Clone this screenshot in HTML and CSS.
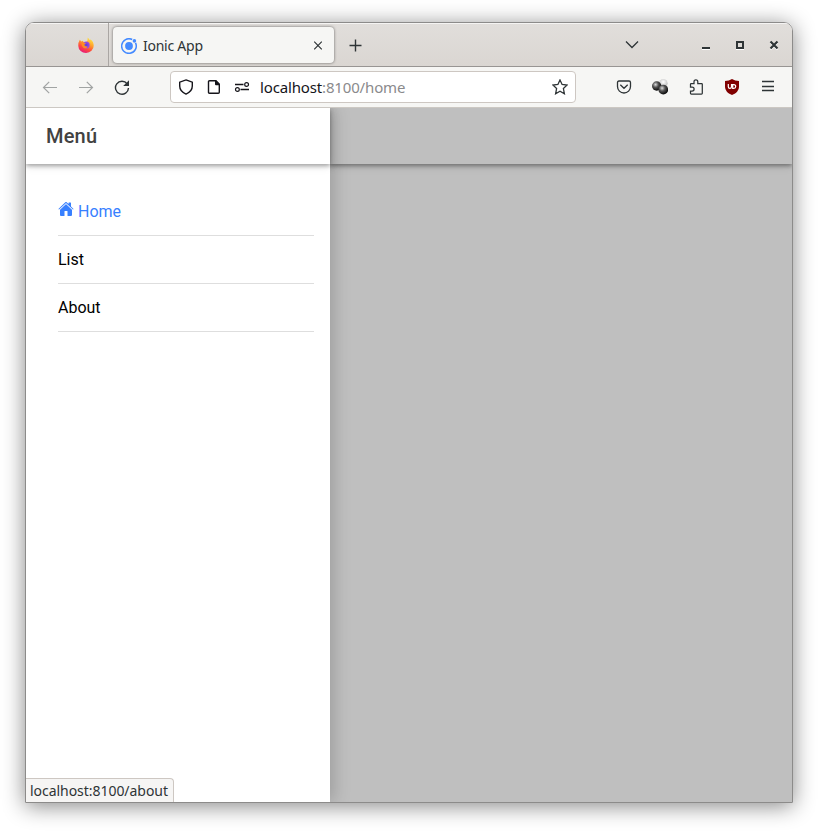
FILE: index.html
```html
<!DOCTYPE html>
<html lang="es">
<head>
<meta charset="utf-8">
<title>Ionic App</title>
<link rel="stylesheet" href="styles.css">
</head>
<body>
<svg class="defs" aria-hidden="true">
  <defs>
    <linearGradient id="flame" x1="0.8" y1="0" x2="0.3" y2="1"><stop offset="0" stop-color="#fff04a"/><stop offset=".4" stop-color="#ffa12b"/><stop offset=".7" stop-color="#ff4a3d"/><stop offset="1" stop-color="#e5187f"/></linearGradient>
    <radialGradient id="globe"><stop offset="0" stop-color="#5641d8"/><stop offset="1" stop-color="#a44be8"/></radialGradient>
    <radialGradient id="dark" cx=".38" cy=".35" r=".65"><stop offset="0" stop-color="#ddd"/><stop offset=".45" stop-color="#555"/><stop offset="1" stop-color="#080808"/></radialGradient>
    <radialGradient id="light" cx=".5" cy=".35" r=".65"><stop offset="0" stop-color="#fff"/><stop offset="1" stop-color="#b4b4b4"/></radialGradient>
  </defs>
</svg>
<main class="window">
  <header class="tabbar">
    <div class="pinned">
      <svg class="icon" viewBox="0 0 16 16"><path fill="url(#flame)" d="M1.8 2.8 3.3 4.4 5 3.7 5.5 5.2 8 5.4 9.5 3.5 9.7.5Q11 1.5 11.7 3L12.7 2.6Q15.8 5 15.7 8.8A7.7 7 0 0 1 .3 9Q.2 5.2 1.8 2.8Z"/><circle cx="8.2" cy="8" r="3.5" fill="url(#globe)"/><path fill="#ff8b23" d="M3.5 5.2 8 6 6.3 7.6Q6.3 10 9.7 9.4 8.4 12 5.8 11 3.3 9.4 3.5 5.2Z"/></svg>
    </div>
    <div class="tab">
      <svg class="icon" viewBox="0 0 16 16"><circle cx="8" cy="8" r="3.9" fill="#448aff"/><path fill="none" stroke="#448aff" stroke-width="1.5" d="M11.2 1.5A7.3 7.3 0 1 0 14.5 4.8"/><circle cx="13.4" cy="2.9" r="1.8" fill="#448aff"/></svg>
      <span class="tab-title">Ionic App</span>
      <svg class="icon line" viewBox="0 0 16 16"><path d="m4.2 3.7 7.6 7.6M11.8 3.7l-7.6 7.6"/></svg>
    </div>
    <svg class="icon line new-tab" viewBox="0 0 16 16"><path stroke-width="1.4" d="M7.500 2.500v12M1.500 8.500h12"/></svg>
    <div class="controls">
      <svg class="icon line all-tabs" viewBox="0 0 16 16"><path stroke-width="1.3" d="m2 4.5 6 6 6-6"/></svg>
      <svg class="icon" viewBox="0 0 16 16"><path fill="#fff" d="M4 12h8v1H4z"/><path fill="#2e3436" d="M4 10h8v2H4z"/></svg>
      <svg class="icon" viewBox="0 0 16 16"><path fill="#fff" d="M4 12h8v1H4z"/><path fill="none" stroke="#2e3436" stroke-width="2" d="M5 5h6v6H5z"/></svg>
      <svg class="icon" viewBox="0 0 16 16"><path fill="none" stroke="#fff" stroke-width="2" d="m4.5 5.5 7 7m0-7-7 7"/><path fill="none" stroke="#2e3436" stroke-width="2.2" d="m4.5 4.5 7 7m0-7-7 7"/></svg>
    </div>
  </header>
  <nav class="toolbar">
    <div class="history">
      <svg class="icon line faded" viewBox="0 0 16 16"><path d="M15 8.5H1.5M7.2 2.8 1.5 8.5l5.7 5.7"/></svg>
      <svg class="icon line faded" viewBox="0 0 16 16"><path d="M1 8.5h13.5M8.8 2.8l5.7 5.7-5.7 5.7"/></svg>
      <svg class="icon line" viewBox="0 0 16 16"><path stroke-width="1.4" d="M13.2 4.8A6.5 6.5 0 1 0 14.5 9"/><path fill="#2e3436" stroke="none" d="M15 1.2v5.3a.5.5 0 0 1-.5.5H9.2z"/></svg>
    </div>
    <div class="address">
      <svg class="icon line dark" viewBox="0 0 16 16"><path stroke-width="1.4" d="M8 .9 14.3 3.2V7c0 3.3-2.3 6.4-6.3 8.1C4 13.4 1.7 10.3 1.7 7V3.2z"/></svg>
      <svg class="icon line dark" viewBox="0 0 16 16"><path stroke-width="1.4" d="M3.500 1.700h6l3.800 3.800v7.800q0 1-1 1H3.500q-1 0-1-1V2.700q0-1 1-1z"/><path fill="#15141a" stroke="none" d="M9 1h1.200L14 5v1.200H10q-1 0-1-1z"/></svg>
      <svg class="icon line dark" viewBox="0 0 16 16"><path stroke-width="1.3" d="M1 5.500h8.500M6.500 10.500h8.500"/><circle cx="12.600" cy="5.500" r="1.900"/><circle cx="3.400" cy="10.500" r="1.900"/></svg>
      <span class="url">localhost<span class="path">:8100/home</span></span>
      <svg class="icon line" viewBox="0 0 16 16"><path stroke-width="1.3" d="M8 .9 10.1 5.4 15.1 6 11.4 9.5 12.4 14.8 8 12.3 3.6 14.8 4.6 9.5.9 6 5.9 5.4z"/></svg>
    </div>
    <div class="extensions">
      <svg class="icon line" viewBox="0 0 16 16"><path stroke-width="1.3" d="M3 2h10q1.500 0 1.500 1.500v4a6.500 6.500 0 0 1-13 0v-4Q1.500 2 3 2zM4.300 5.800 8 9.300 11.700 5.800"/></svg>
      <svg class="icon" viewBox="0 0 16 16"><circle cx="11.300" cy="4.300" r="4.300" fill="url(#light)"/><circle cx="4.700" cy="7" r="4.700" fill="url(#dark)"/><circle cx="11.300" cy="10.600" r="4.900" fill="url(#dark)"/></svg>
      <svg class="icon line" viewBox="0 0 16 16"><path stroke-width="1.250" d="M2.500 8V5.300q0-.8.800-.8H6V2.700a1.900 1.900 0 0 1 3.800 0v1.800h3.700q.8 0 .8.800v8.900q0 .8-.8.8H3.300q-.8 0-.8-.8V12h1.600a2 2 0 0 0 0-4z"/></svg>
      <svg class="icon" viewBox="0 0 16 16"><path fill="#800000" d="M8 0Q11 2 15 2v6q0 5-7 8-7-3-7-8V2Q5 2 8 0z"/><path fill="none" stroke="#fff" stroke-width="1.200" d="M4.300 5v2.800a1.600 1.600 0 0 0 3.200 0V5M8.700 5.600h1.100a1.900 1.900 0 0 1 0 3.800H8.700z"/></svg>
      <svg class="icon line" viewBox="0 0 16 16"><path stroke-width="1.300" d="M2 2.500h12M2 7.500h12M2 11.500h12"/></svg>
    </div>
  </nav>
  <section class="page">
    <aside class="menu">
      <div class="menu-header"><h1>Menú</h1></div>
      <ul class="menu-list">
        <li class="active"><svg class="home" viewBox="0 0 512 512"><path d="M261.560 101.280a8 8 0 0 0-11.060 0L66.400 277.150a8 8 0 0 0-2.470 5.790L63.900 448a32 32 0 0 0 32 32H192a16 16 0 0 0 16-16V328a8 8 0 0 1 8-8h80a8 8 0 0 1 8 8v136a16 16 0 0 0 16 16h96.060a32 32 0 0 0 32-32V282.940a8 8 0 0 0-2.470-5.790z"/><path d="m490.910 244.150-74.800-71.560V64a16 16 0 0 0-16-16h-48a16 16 0 0 0-16 16v32l-57.920-55.380C272.770 35.140 264.710 32 256 32c-8.680 0-16.720 3.140-22.140 8.630l-212.700 203.500c-6.220 6-7 15.870-1.340 22.370A16 16 0 0 0 43 267.560L250.500 69.280a8 8 0 0 1 11.060 0l207.520 198.280a16 16 0 0 0 22.600-.44c6.140-6.360 5.630-16.860-.77-22.970z"/></svg> <span>Home</span></li>
        <li>List</li>
        <li>About</li>
      </ul>
      <div class="status">localhost:8100/about</div>
    </aside>
    <div class="backdrop"><div class="page-header"></div></div>
  </section>
</main>
</body>
</html>
```
FILE: styles.css
```css
* { box-sizing: border-box; }
body { margin: 0; padding: 22px 25px 28px; background: #fff; overflow: hidden; }
.defs { display: block; width: 0; height: 0; position: absolute; }
.icon { display: block; width: 16px; height: 16px; flex: none; }
.line { fill: none; stroke: #2e3436; stroke-width: 1.2; }
.dark { stroke: #15141a; }
.faded { opacity: .42; }
.window {
  display: flex; flex-direction: column; width: 768px; height: 781px;
  border: 1px solid #8c8b8a; border-radius: 9px 9px 0 0; overflow: hidden;
  box-shadow: 0 3px 22px rgba(0,0,0,.48);
  font-family: "Noto Sans", sans-serif; font-size: 14px;
}
.tabbar {
  height: 44px; flex: none; display: flex; align-items: center;
  background: linear-gradient(#e1dedb, #dad6d2); border-bottom: 1px solid #989593;
  box-shadow: inset 0 1px #f5f4f3;
}
.pinned { width: 83px; height: 100%; padding: 0 14px; border-right: 1px solid #aaa6a3; display: flex; align-items: center; justify-content: flex-end; }
.tab {
  width: 221px; height: 36px; margin: 1px 0 0 4px; padding: 1px 8px 0; display: flex; align-items: center;
  background: #f6f6f4; border-radius: 4px; box-shadow: 0 0 3px rgba(0,0,0,.55); color: #2e3436;
}
.tab .icon:last-child { margin-right: 0; }
.tab-title { flex: 1; padding-left: 6px; letter-spacing: -.25px; }
.new-tab { margin-left: 14px; }
.controls { margin-left: auto; padding-right: 10px; display: flex; gap: 18px; }
.all-tabs { margin-right: 40px; }
.toolbar { height: 41px; flex: none; display: flex; align-items: center; background: #f6f6f4; border-bottom: 1px solid #ccc8c3; }
.history { width: 144px; padding-left: 16px; display: flex; gap: 20px; }
.address {
  width: 406px; height: 32px; padding: 0 7px; display: flex; align-items: center; gap: 12px;
  background: #fff; border: 1px solid #cdc7c2; border-radius: 4px;
}
.url { flex: 1; margin-left: -2px; font-size: 15px; color: #15141a; letter-spacing: -.15px; }
.path { color: #8a8a8c; }
.extensions { margin-left: auto; padding-right: 16px; display: flex; gap: 20px; }
.page { flex: 1; min-height: 0; display: flex; overflow: hidden; font-family: Roboto, sans-serif; background: #bfbfbf; }
.menu { width: 304px; background: #fff; display: flex; flex-direction: column; z-index: 1; box-shadow: 4px 0 16px rgba(0,0,0,.18); }
.menu-header { height: 56px; flex: none; padding: 0 20px; display: flex; align-items: center; box-shadow: 0 2px 4px rgba(0,0,0,.3), 0 1px 10px rgba(0,0,0,.14); }
h1 { margin: 0; font-size: 20px; font-weight: 500; letter-spacing: .2px; color: #424242; }
.menu-list { margin: 24px 16px 0 32px; padding: 0; list-style: none; font-size: 16px; color: #000; }
.menu-list li { height: 48px; border-bottom: 1px solid #dedede; line-height: 47px; }
.menu-list .active { color: #3880ff; }
.home { width: 16px; height: 16px; fill: currentColor; }
.status {
  margin-top: auto; width: 148px; height: 24px; padding: 0 4px; line-height: 23px;
  background: #f6f5f4; border: 1px solid #cdc7c2; border-width: 1px 1px 0 0; border-radius: 0 4px 0 0;
  font-family: "Noto Sans", sans-serif; font-size: 14px; color: #2e3436; white-space: nowrap; letter-spacing: -.04px;
}
.backdrop { flex: 1; }
.page-header { height: 56px; box-shadow: 0 2px 4px rgba(0,0,0,.35), 0 1px 10px rgba(0,0,0,.14); background: #bfbfbf; }
```
